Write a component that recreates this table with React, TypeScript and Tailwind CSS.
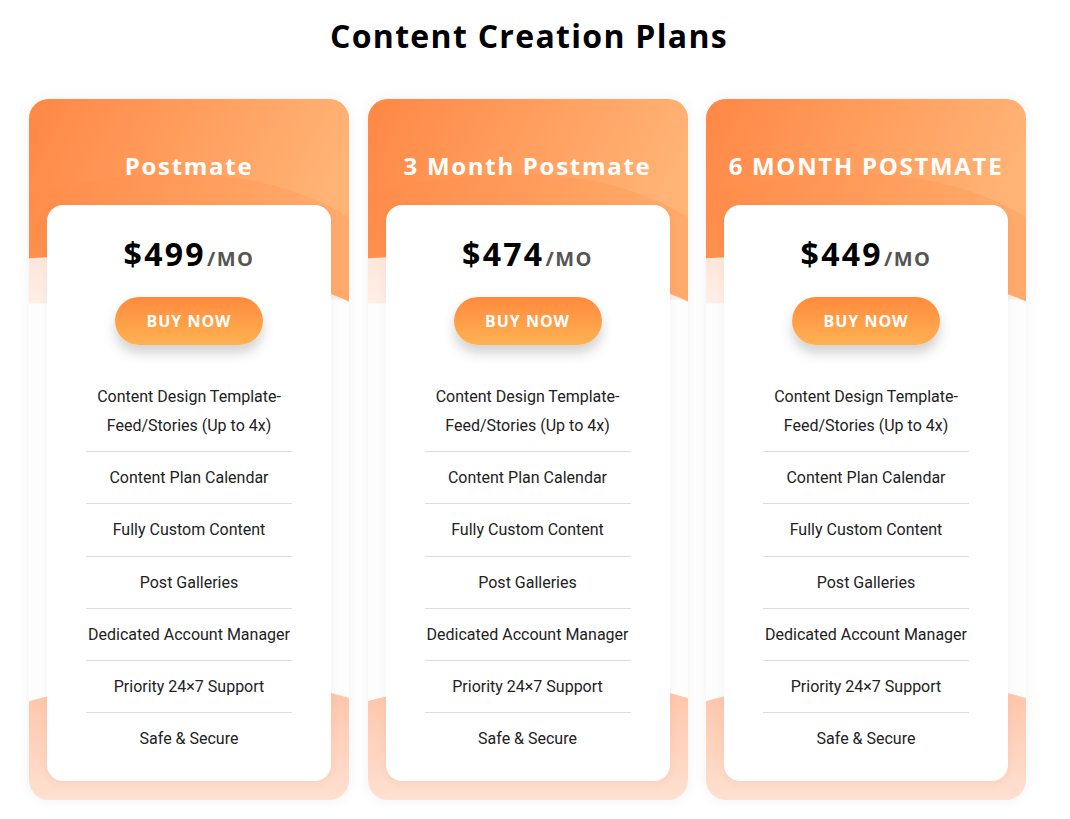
import React from "react";

const features = [
  "Content Design Template-\nFeed/Stories (Up to 4x)",
  "Content Plan Calendar",
  "Fully Custom Content",
  "Post Galleries",
  "Dedicated Account Manager",
  "Priority 24×7 Support",
  "Safe & Secure",
];

const plans = [
  { id: "a", title: "Postmate", price: "$499" },
  { id: "b", title: "3 Month Postmate", price: "$474" },
  { id: "c", title: "6 MONTH POSTMATE", price: "$449" },
];

function CardBg({ id }: { id: string }) {
  return (
    <svg
      className="absolute inset-0 h-full w-full"
      viewBox="0 0 320 700"
      preserveAspectRatio="none"
      aria-hidden="true"
    >
      <defs>
        <linearGradient id={`or-${id}`} x1="0" y1="0" x2="1" y2="0.3">
          <stop offset="0" stopColor="#ff8745" />
          <stop offset="1" stopColor="#ffb476" />
        </linearGradient>
        <linearGradient id={`pe-${id}`} x1="0" y1="0" x2="0" y2="1">
          <stop offset="0" stopColor="#fdcdb4" />
          <stop offset="1" stopColor="#feeee6" />
        </linearGradient>
        <linearGradient id={`bt-${id}`} x1="0" y1="0" x2="0" y2="1">
          <stop offset="0" stopColor="#ffc3a6" />
          <stop offset="1" stopColor="#ffe0d1" />
        </linearGradient>
      </defs>
      <rect x="0" y="0" width="320" height="700" fill="#fdfdfd" />
      <path d="M0 0 H320 V200 L0 204 Z" fill={`url(#pe-${id})`} />
      <path d="M0 0 H320 V202 C250 170 110 150 0 159 Z" fill={`url(#or-${id})`} />
      <path
        d="M0 95 Q200 45 320 118 V202 C250 170 110 150 0 159 Z"
        fill="#ff8a45"
        opacity="0.22"
      />
      <path d="M0 601 C90 575 250 575 320 598 V700 H0 Z" fill={`url(#bt-${id})`} />
    </svg>
  );
}

function Card({ id, title, price }: { id: string; title: string; price: string }) {
  return (
    <div className="relative w-[320px] overflow-hidden rounded-[20px] shadow-[0_0_14px_rgba(0,0,0,0.06)]">
      <CardBg id={id} />
      <div className="relative flex flex-col px-[18px] pb-[19px]">
        <h2 className="pt-[52px] pb-[24px] text-center font-['Open_Sans',sans-serif] text-[24px] font-bold leading-[30px] tracking-[1.7px] text-white">
          {title}
        </h2>
        <div className="flex flex-col items-center rounded-[16px] bg-white pt-[29px] pb-[17px] shadow-[0_2px_10px_rgba(0,0,0,0.05)]">
          <div className="flex items-baseline font-['Open_Sans',sans-serif] leading-[40px]">
            <span className="text-[32px] font-bold tracking-[2.3px] text-black">{price}</span>
            <span className="ml-[1px] text-[20px] font-bold tracking-[1.5px] text-[#555]">/MO</span>
          </div>
          <button className="mt-[18px] h-[48px] w-[148px] rounded-full bg-gradient-to-b from-[#ff8a3d] to-[#ffb153] font-['Open_Sans',sans-serif] text-[16px] font-bold tracking-[1px] text-white shadow-[0_8px_12px_rgba(80,80,80,0.25)]">
            BUY NOW
          </button>
          <ul className="mt-[26px] w-[206px] font-['Roboto',sans-serif] text-[16px] leading-[29px] text-[#222]">
            {features.map((f, i) => (
              <li
                key={i}
                className={`whitespace-pre-line py-[11.1px] text-center ${
                  i < features.length - 1 ? "border-b border-[#ddd]" : ""
                }`}
              >
                {f}
              </li>
            ))}
          </ul>
        </div>
      </div>
    </div>
  );
}

export default function App() {
  return (
    <div className="min-h-[819px] w-[1070px] bg-white pt-[16px]">
      <h1 className="pr-[12px] text-center font-['Open_Sans',sans-serif] text-[32px] font-bold leading-[40px] tracking-[1.3px] text-black">
        Content Creation Plans
      </h1>
      <div className="mt-[43px] ml-[29px] flex gap-[18.5px]">
        {plans.map((p) => (
          <Card key={p.id} {...p} />
        ))}
      </div>
    </div>
  );
}
